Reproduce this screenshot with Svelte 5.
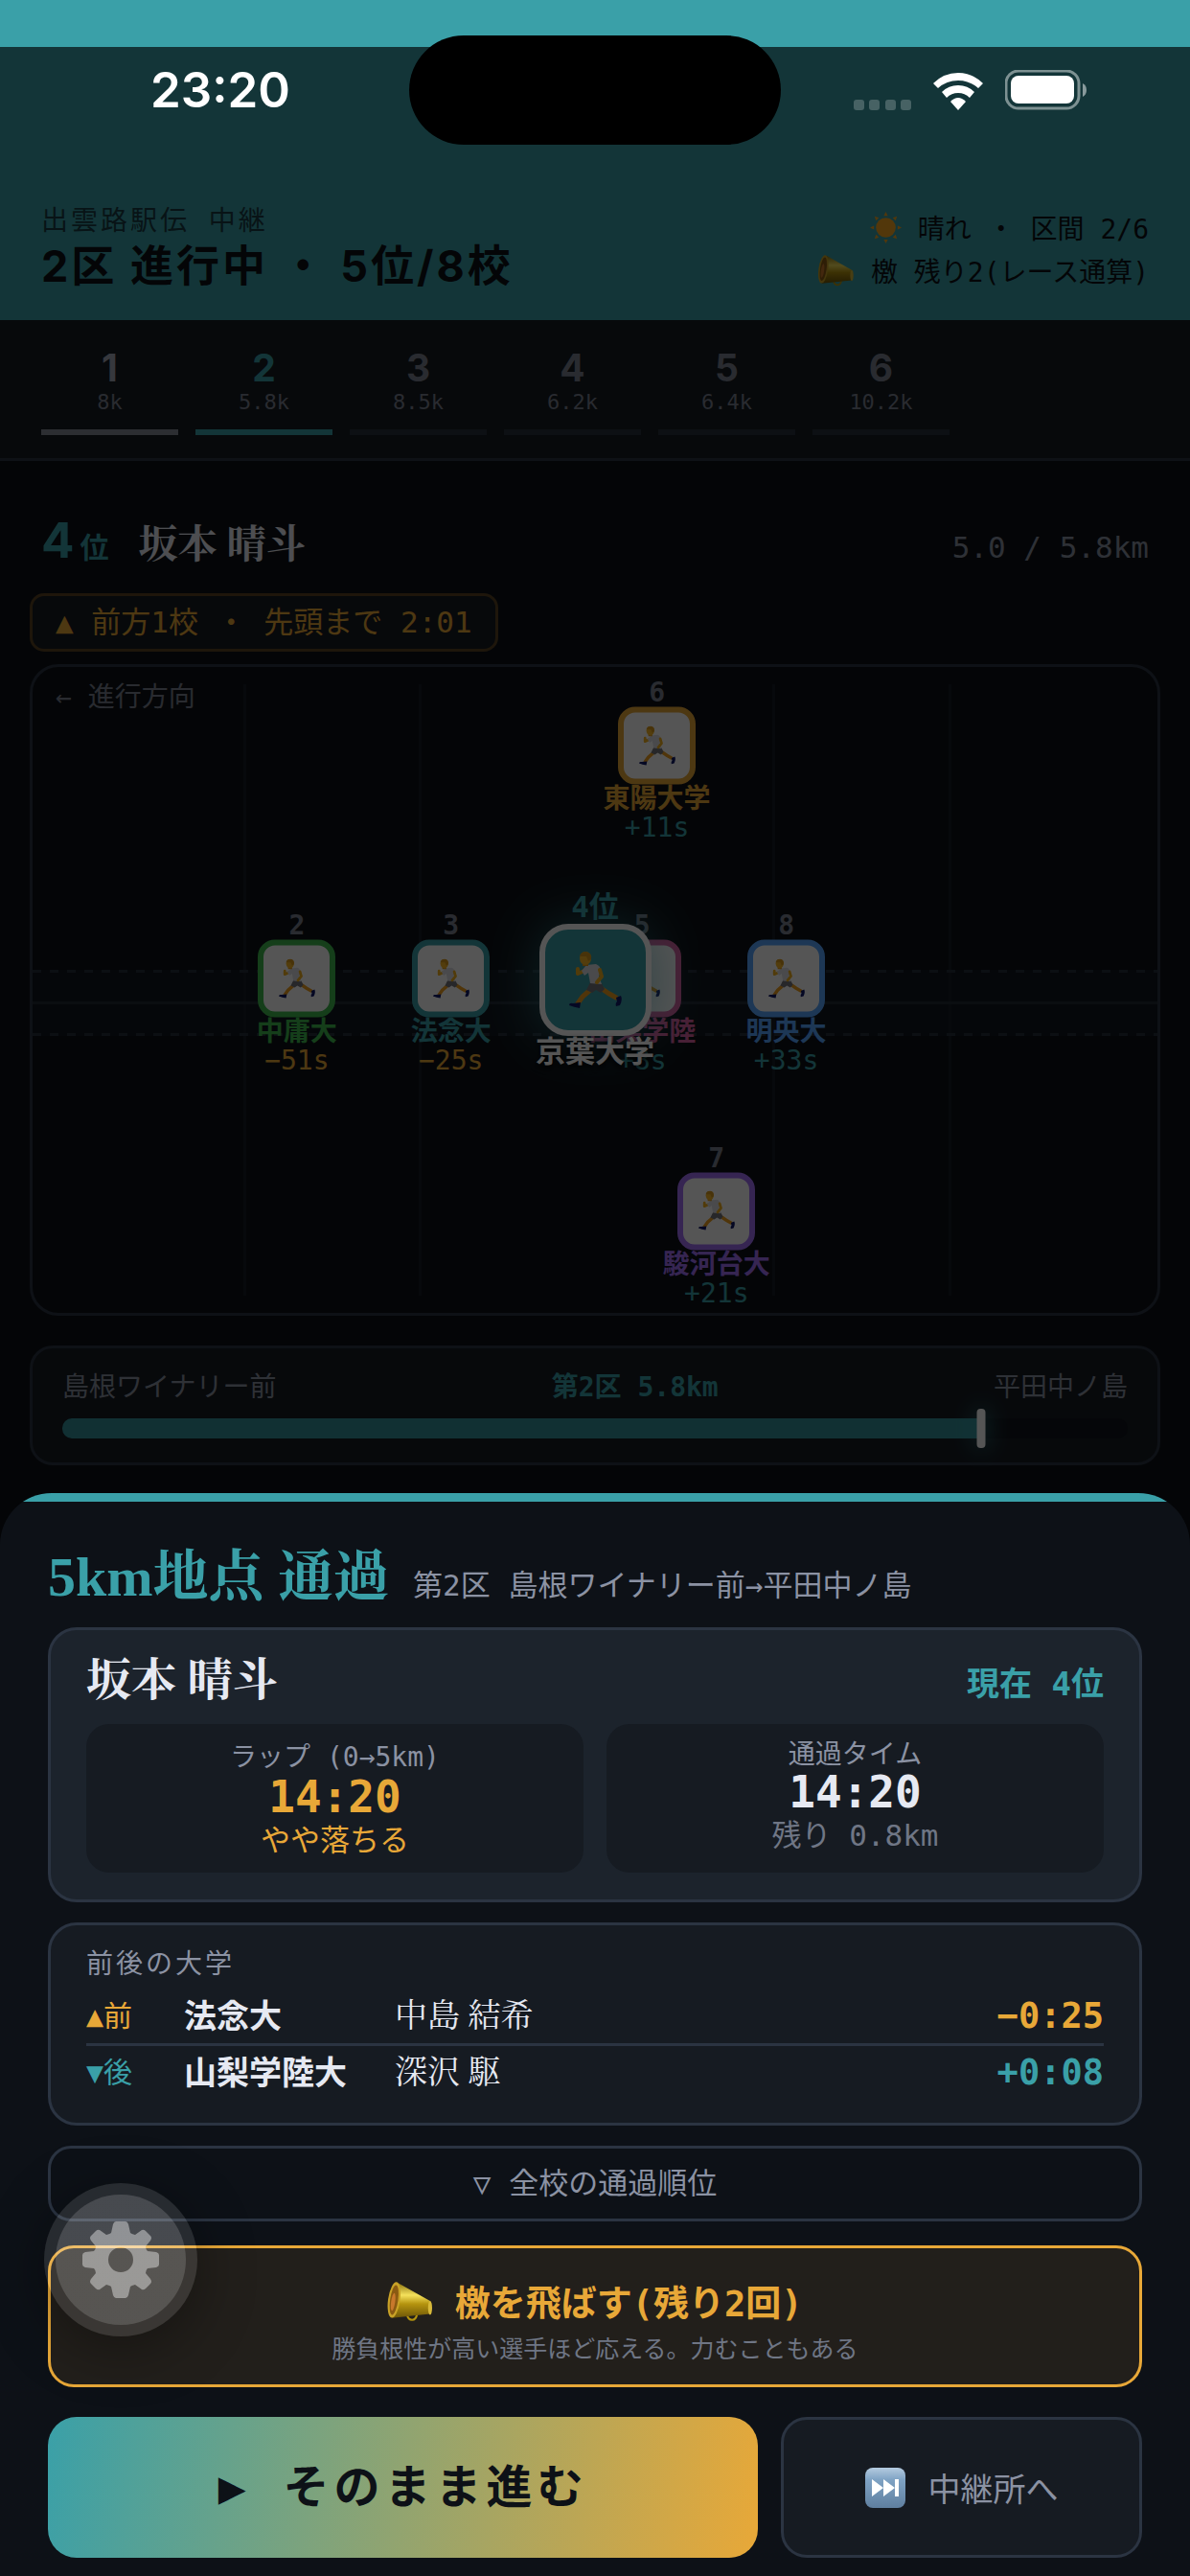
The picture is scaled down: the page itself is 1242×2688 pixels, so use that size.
<script lang="ts">
type Team = {
    rank: number
    name: string
    color: string
    x: number
    y: number
    gap: string
}

const legs = [
    { no: 1, dist: '8k', status: 'done' },
    { no: 2, dist: '5.8k', status: 'active' },
    { no: 3, dist: '8.5k', status: 'todo' },
    { no: 4, dist: '6.2k', status: 'todo' },
    { no: 5, dist: '6.4k', status: 'todo' },
    { no: 6, dist: '10.2k', status: 'todo' },
]

// x and y are percentages of the course map
const teams: Team[] = [
    { rank: 6, name: '東陽大学', color: '#e8a838', x: 55.5, y: 14, gap: '+11s' },
    { rank: 2, name: '中庸大', color: '#3fb950', x: 23.5, y: 50, gap: '−51s' },
    { rank: 3, name: '法念大', color: '#3aa0a8', x: 37.2, y: 50, gap: '−25s' },
    { rank: 5, name: '山梨学陸', color: '#db61a2', x: 54.2, y: 50, gap: '+8s' },
    { rank: 8, name: '明央大', color: '#58a6ff', x: 67, y: 50, gap: '+33s' },
    { rank: 7, name: '駿河台大', color: '#a371f7', x: 60.8, y: 86, gap: '+21s' },
]

const gridLines = [18.7, 34.3, 65.8, 81.4]

const neighbors = [
    { side: 'ahead', mark: '▲前', school: '法念大', runner: '中島 結希', diff: '−0:25' },
    { side: 'behind', mark: '▼後', school: '山梨学陸大', runner: '深沢 駆', diff: '+0:08' },
]

const current = 5.0
const total = 5.8
let progress = $derived((current / total) * 100)
let showAll = $state(false)
</script>

{#snippet runnerIcon()}
    <svg class="runner" viewBox="0 0 55 60" aria-hidden="true">
        <path d="M33 38 L42 44 L49 48" fill="none" stroke="#f0a020" stroke-width="5" stroke-linecap="round" />
        <path d="M22 40 L14 47 L9 54" fill="none" stroke="#f0a020" stroke-width="5" stroke-linecap="round" />
        <path d="M12 53 L11 59 Q5 58 0 56 Q0 53 4 54 Z" fill="#10186a" />
        <path d="M49 48 L54 46 Q56 50 53 56 L49 57 Q48 54 50 52 Z" fill="#10186a" />
        <path d="M22 32 L34 33 L37 39 L33 43 L28 40 L24 43 L18 40 Z" fill="#77777c" />
        <path d="M16 20 L9 23 L9 18" fill="none" stroke="#f4b020" stroke-width="4" stroke-linecap="round" stroke-linejoin="round" />
        <path d="M13 20 L18 14 L28 13 Q33 15 33 20 L31 26 L34 34 L22 33 L20 22 L16 25 Z" fill="#dfdfe4" />
        <path d="M32 19 L34 26 L29 32" fill="none" stroke="#f4b020" stroke-width="4" stroke-linecap="round" stroke-linejoin="round" />
        <path d="M14 11 h6 v4 h-6z" fill="#e09a1c" />
        <ellipse cx="17" cy="7" rx="6" ry="7" fill="#f8b828" />
        <path d="M11 5 Q12 0 18 0 Q24 1 23 8 L20 10 L18 5 Z" fill="#d99a20" />
    </svg>
{/snippet}

{#snippet megaphoneIcon()}
    <svg class="megaphone" viewBox="0 0 46 40" aria-hidden="true">
        <defs>
            <linearGradient id="brass" x1="0" y1="0" x2="0" y2="1">
                <stop offset="0" stop-color="#8d7410" />
                <stop offset="0.35" stop-color="#f5e25c" />
                <stop offset="0.6" stop-color="#b5940f" />
                <stop offset="1" stop-color="#6e5608" />
            </linearGradient>
        </defs>
        <path d="M20 33 Q21 38 25 38 Q29 38 30 32" fill="none" stroke="#b5940f" stroke-width="2" />
        <path d="M11 1 L43 19 Q46 25 43 32 L5 36 Z" fill="url(#brass)" />
        <ellipse cx="7" cy="18" rx="6" ry="18" transform="rotate(8 7 18)" fill="#c9a227" />
        <ellipse cx="7" cy="18" rx="4" ry="15" transform="rotate(8 7 18)" fill="#8a5a12" />
        <ellipse cx="6" cy="20" rx="2" ry="9" transform="rotate(8 6 20)" fill="#c8782c" />
        <ellipse cx="43" cy="26" rx="2" ry="7" fill="#d8b93a" />
    </svg>
{/snippet}

<div class="status-bar">
    <div class="island"></div>
    <span class="clock">23:20</span>
    <div class="status-icons">
        <svg class="signal" viewBox="0 0 60 12">
            {#each [0, 16, 33, 49] as x}
                <rect {x} y="1" width="11" height="11" rx="3" fill="#fff" opacity="0.22" />
            {/each}
        </svg>
        <svg class="wifi" viewBox="0 0 52 39" fill="#fff">
            <path d="M0 11 Q11 0 26 0 Q41 0 52 11 L47 16 Q38 8 26 8 Q14 8 5 16 Z" />
            <path d="M9 20 Q16 13 26 13 Q36 13 43 20 L38 26 Q33 21 26 21 Q19 21 14 26 Z" />
            <path d="M18 30 Q22 26 26 26 Q30 26 34 30 L26 39 Z" />
        </svg>
        <svg class="battery" viewBox="0 0 86 42">
            <rect x="1" y="1" width="76" height="39" rx="13" fill="none" stroke="#fff" stroke-width="3" opacity="0.45" />
            <rect x="6" y="6" width="66" height="29" rx="8" fill="#fff" />
            <path d="M81 14 Q85 16 85 21 Q85 26 81 28 Z" fill="#fff" opacity="0.5" />
        </svg>
    </div>
</div>

<div class="race">
    <header>
        <div>
            <div class="event">出雲路駅伝 中継</div>
            <h1>2区 進行中 ・ 5位/8校</h1>
        </div>
        <div class="conditions">
            <div>
                <svg class="sun" viewBox="0 0 32 32" fill="#f5a623">
                    <circle cx="16" cy="16" r="10" />
                    {#each [0, 45, 90, 135, 180, 225, 270, 315] as deg}
                        <path d="M14 4 L16 0 L18 4 Z" transform="rotate({deg} 16 16)" />
                    {/each}
                </svg>
                晴れ ・ 区間 2/6
            </div>
            <div>{@render megaphoneIcon()} 檄 残り2(レース通算)</div>
        </div>
    </header>

    <nav class="legs">
        {#each legs as leg}
            <div class="leg {leg.status}">
                <span class="leg-no">{leg.no}</span>
                <span class="leg-dist">{leg.dist}</span>
                <span class="leg-bar"></span>
            </div>
        {/each}
    </nav>

    <main>
        <div class="runner-row">
            <span class="place">4<small>位</small></span>
            <span class="runner-name">坂本 晴斗</span>
            <span class="distance">5.0 / 5.8km</span>
        </div>
        <div class="tag">▲ 前方1校 ・ 先頭まで 2:01</div>

        <div class="map">
            <span class="direction">← 進行方向</span>
            {#each gridLines as x}
                <div class="grid-line" style="left: {x}%"></div>
            {/each}
            <div class="road"></div>
            {#each teams as team}
                <div class="token" style="left: {team.x}%; top: {team.y}%; --team: {team.color}">
                    <span class="token-rank">{team.rank}</span>
                    <div class="token-card">{@render runnerIcon()}</div>
                    <span class="token-name">{team.name}</span>
                    <span class="token-gap" class:ahead={team.gap.startsWith('−')}>{team.gap}</span>
                </div>
            {/each}
            <div class="token own">
                <span class="token-rank">4位</span>
                <div class="token-card">{@render runnerIcon()}</div>
                <span class="token-name">京葉大学</span>
                <span class="token-gap"></span>
            </div>
        </div>

        <div class="course">
            <div class="course-labels">
                <span>島根ワイナリー前</span>
                <strong>第2区 5.8km</strong>
                <span>平田中ノ島</span>
            </div>
            <div class="track">
                <div class="fill" style="width: {progress}%"></div>
                <div class="marker" style="left: {progress}%"></div>
            </div>
        </div>
    </main>
</div>

<div class="backdrop"></div>

<section class="sheet">
    <div class="sheet-title">
        <h2>5km地点 通過</h2>
        <span>第2区 島根ワイナリー前→平田中ノ島</span>
    </div>

    <div class="card hero">
        <div class="hero-head">
            <span class="hero-name">坂本 晴斗</span>
            <span class="hero-place">現在 4位</span>
        </div>
        <div class="stats">
            <div class="stat slow">
                <span class="stat-label mono">ラップ (0→5km)</span>
                <span class="stat-value">14:20</span>
                <span class="stat-note">やや落ちる</span>
            </div>
            <div class="stat">
                <span class="stat-label">通過タイム</span>
                <span class="stat-value">14:20</span>
                <span class="stat-note">残り 0.8km</span>
            </div>
        </div>
    </div>

    <div class="card neighbors">
        <div class="card-label">前後の大学</div>
        <table>
            <tbody>
                {#each neighbors as n}
                    <tr class={n.side}>
                        <td class="mark">{n.mark}</td>
                        <td class="school">{n.school}</td>
                        <td class="athlete">{n.runner}</td>
                        <td class="diff">{n.diff}</td>
                    </tr>
                {/each}
            </tbody>
        </table>
    </div>

    <button class="toggle" aria-expanded={showAll} onclick={() => (showAll = !showAll)}>▽ 全校の通過順位</button>

    <button class="cheer">
        <span class="cheer-title">{@render megaphoneIcon()} 檄を飛ばす(残り2回)</span>
        <span class="cheer-note">勝負根性が高い選手ほど応える。力むこともある</span>
    </button>

    <div class="actions">
        <button class="go">▶ そのまま進む</button>
        <button class="skip">
            <svg viewBox="0 0 42 42" aria-hidden="true">
                <defs>
                    <linearGradient id="skip-bg" x1="0" y1="0" x2="0" y2="1">
                        <stop offset="0" stop-color="#b4cbe0" />
                        <stop offset="0.3" stop-color="#7fa3c4" />
                        <stop offset="1" stop-color="#5f7f9f" />
                    </linearGradient>
                </defs>
                <rect width="42" height="42" rx="8" fill="url(#skip-bg)" />
                <path d="M7 12 L19 21 L7 30 Z M19 12 L31 21 L19 30 Z M31 12 h4 v18 h-4 Z" fill="#fff" />
            </svg>
            中継所へ
        </button>
    </div>
</section>

<button class="settings" aria-label="設定">
    <svg viewBox="-40 -40 80 80" aria-hidden="true">
        <path
            fill-rule="evenodd"
            d="M-5 -40 H5 Q7 -40 8 -37 L10 -28 Q11 -27 15 -26 L22 -31 Q24 -32 26 -30 L31 -25 Q33 -23 31 -20 L26 -14 Q26 -11 28 -9 L37 -8 Q40 -7 40 -5 V5 Q40 7 37 8 L28 9 Q26 11 26 14 L31 20 Q33 23 31 25 L26 30 Q24 32 22 31 L15 26 Q11 27 10 28 L8 37 Q7 40 5 40 H-5 Q-7 40 -8 37 L-10 28 Q-11 27 -15 26 L-22 31 Q-24 32 -26 30 L-31 25 Q-33 23 -31 20 L-26 14 Q-26 11 -28 9 L-37 8 Q-40 7 -40 5 V-5 Q-40 -7 -37 -8 L-28 -9 Q-26 -11 -26 -14 L-31 -20 Q-33 -23 -31 -25 L-26 -30 Q-24 -32 -22 -31 L-15 -26 Q-11 -27 -10 -28 L-8 -37 Q-7 -40 -5 -40 Z M13 0 A13 13 0 1 0 -13 0 A13 13 0 1 0 13 0 Z" />
    </svg>
</button>

<style>
:global(body) {
    --teal: #3aa0a8;
    --amber: #e8a838;
    --bg: #0d1117;
    --panel: #161b22;
    --line: #2b3442;
    --text: #e6e9f2;
    --muted: #8b92a3;
    --faint: #7b8190;
    --mono: 'DejaVu Sans Mono', 'Noto Sans CJK JP', monospace;
    --sans: Inter, 'Noto Sans CJK JP', sans-serif;
    --serif: 'Liberation Serif', 'Noto Serif CJK JP', 'Noto Sans CJK JP', serif;
    background: var(--bg);
    color: var(--text);
    font-family: var(--mono);
    font-size: 28px;
    overflow: hidden;
}
button {
    font-family: inherit;
    cursor: pointer;
}
h1,
h2 {
    margin: 0;
}

/* status bar */
.status-bar {
    position: fixed;
    inset: 0 0 auto;
    z-index: 3;
    display: flex;
    justify-content: space-between;
    align-items: center;
    height: 151px;
    padding: 37px 107px 0 157px;
    box-sizing: border-box;
}
.island {
    position: absolute;
    left: 50%;
    top: 37px;
    width: 388px;
    height: 114px;
    border-radius: 57px;
    background: #000;
    transform: translateX(-50%);
}
.clock {
    color: #fff;
    font: 600 51px/60px var(--sans);
}
.status-icons {
    display: flex;
    align-items: flex-end;
    gap: 23px;
}
.signal {
    width: 60px;
    height: 12px;
}
.wifi {
    width: 52px;
    height: 39px;
}
.battery {
    width: 86px;
    height: 42px;
}

/* race screen */
.race {
    min-height: 100vh;
    background: var(--bg);
}
header {
    display: flex;
    justify-content: space-between;
    padding: 214px 43px 26px;
    background: var(--teal);
    color: var(--bg);
}
.event {
    line-height: 33px;
    letter-spacing: 3px;
    opacity: 0.7;
}
h1 {
    font: 700 45px/61px var(--sans);
    letter-spacing: 3px;
}
.conditions {
    padding-top: 3px;
    text-align: right;
    line-height: 45px;
}
.sun {
    width: 33px;
    height: 33px;
    vertical-align: -5px;
}
.conditions .megaphone {
    width: 39px;
    height: 33px;
    vertical-align: -5px;
}
.legs {
    display: flex;
    gap: 18px;
    padding: 27px 43px 24px;
    background: var(--panel);
    border-bottom: 3px solid var(--line);
}
.leg {
    display: flex;
    flex-direction: column;
    width: 143px;
    text-align: center;
    color: var(--faint);
}
.leg-no {
    font: 700 39px/45px var(--sans);
}
.leg-dist {
    font-size: 22px;
    line-height: 28px;
    margin-bottom: 14px;
}
.leg-bar {
    height: 6px;
    background: #29313d;
}
.done .leg-no {
    color: #a3a9b8;
}
.done .leg-bar {
    background: #858a97;
}
.active .leg-no {
    color: var(--teal);
}
.active .leg-bar {
    background: var(--teal);
}
main {
    padding: 45px 31px 0;
}
.runner-row {
    display: flex;
    align-items: baseline;
    padding: 0 12px;
    line-height: 75px;
}
.place {
    color: var(--teal);
    font: 700 51px/75px var(--sans);
}
.place small {
    margin-left: 6px;
    font-size: 30px;
}
.runner-name {
    margin-left: 31px;
    font: 700 41px/75px var(--serif);
}
.distance {
    margin-left: auto;
    color: var(--muted);
    font-size: 31px;
}
.tag {
    width: fit-content;
    margin: 10px 0 13px;
    padding: 0 24px;
    border: 3px solid #5a4423;
    border-radius: 15px;
    background: var(--panel);
    color: var(--amber);
    font-size: 31px;
    line-height: 55px;
}
.map {
    position: relative;
    height: 674px;
    border: 3px solid var(--line);
    border-radius: 30px;
    overflow: hidden;
}
.direction {
    display: block;
    padding: 12px 24px;
    color: var(--faint);
    line-height: 39px;
}
.grid-line {
    position: absolute;
    top: 18px;
    bottom: 18px;
    width: 3px;
    background: #171c24;
}
.road {
    position: absolute;
    inset: 316px 0 289px;
    background:
        repeating-linear-gradient(90deg, #252d39 0 9px, transparent 9px 18px) top / 100% 3px no-repeat,
        repeating-linear-gradient(90deg, #252d39 0 9px, transparent 9px 18px) bottom / 100% 3px no-repeat,
        linear-gradient(#222a35, #222a35) center / 100% 3px no-repeat,
        #131d2880;
}
.token {
    position: absolute;
    display: flex;
    flex-direction: column;
    align-items: center;
    margin-top: 3px;
    color: var(--team);
    line-height: 30px;
    white-space: nowrap;
    transform: translate(-50%, -50%);
}
.token-rank {
    color: var(--faint);
    font-weight: 700;
}
.token-card {
    display: grid;
    place-items: center;
    box-sizing: border-box;
    width: 81px;
    height: 81px;
    border: 6px solid var(--team);
    border-radius: 18px;
    background: #fff;
}
.runner {
    width: 38px;
    height: 42px;
}
.token-name {
    font-weight: 700;
}
.token-gap {
    min-height: 30px;
    color: var(--teal);
}
.token-gap.ahead {
    color: var(--amber);
}
.own {
    --team: #fff;
    left: 50%;
    top: 50%;
    font-size: 31px;
    line-height: 33px;
}
.own .token-rank {
    color: var(--teal);
    line-height: 36px;
}
.own .token-card {
    width: 117px;
    height: 117px;
    border-radius: 30px;
    background: var(--teal);
    box-shadow: 0 0 54px #3aa0a899;
}
.own .runner {
    width: 55px;
    height: 60px;
}
.own .token-name {
    text-shadow: 0 3px 6px #000;
}
.course {
    margin-top: 31px;
    padding: 24px 31px 25px;
    border: 3px solid var(--line);
    border-radius: 24px;
    background: var(--panel);
}
.course-labels {
    display: flex;
    justify-content: space-between;
    color: var(--muted);
    line-height: 33px;
}
.course-labels strong {
    color: var(--teal);
}
.track {
    position: relative;
    height: 21px;
    margin-top: 16px;
    border-radius: 10px;
    background: #10141b;
}
.fill {
    height: 100%;
    border-radius: 10px 0 0 10px;
    background: #35919a;
}
.marker {
    position: absolute;
    top: -10px;
    width: 9px;
    height: 41px;
    border-radius: 4px;
    background: #fff;
    box-shadow: 0 0 24px #3aa0a8;
    transform: translateX(-50%);
}
.backdrop {
    position: fixed;
    inset: 49px 0 0;
    z-index: 1;
    background: rgba(0, 0, 0, 0.667);
}

/* checkpoint sheet */
.sheet {
    position: fixed;
    inset: auto 0 0;
    z-index: 2;
    padding: 50px 50px 19px;
    border-radius: 54px 54px 0 0;
    background: linear-gradient(var(--teal) 9px, var(--bg) 9px);
}
.sheet-title {
    display: flex;
    align-items: baseline;
    gap: 25px;
    margin-bottom: 6px;
    color: var(--muted);
    font-size: 31px;
    line-height: 75px;
}
h2 {
    color: var(--teal);
    font: 700 58px/75px var(--serif);
}
.card {
    margin-bottom: 21px;
    padding: 24px 37px;
    border: 3px solid var(--line);
    border-radius: 30px;
    background: var(--panel);
}
.hero {
    padding: 21px 37px 28px;
    background: #1c232c;
}
.hero-head {
    display: flex;
    justify-content: space-between;
    align-items: baseline;
    margin-bottom: 10px;
    line-height: 63px;
}
.hero-name {
    font: 700 47px/63px var(--serif);
}
.hero-place {
    color: var(--teal);
    font-size: 34px;
    font-weight: 700;
}
.stats {
    display: grid;
    grid-template-columns: 1fr 1fr;
    gap: 24px;
}
.stat {
    display: flex;
    flex-direction: column;
    padding: 18px 24px 14px;
    border-radius: 24px;
    background: var(--panel);
    text-align: center;
}
.stat-label {
    color: var(--muted);
    line-height: 28px;
}
.stat-label.mono {
    line-height: 33px;
}
.stat-value {
    font-size: 46px;
    font-weight: 700;
    line-height: 51px;
}
.stat-note {
    color: #6f7685;
    font-size: 31px;
    line-height: 39px;
}
.slow .stat-value,
.slow .stat-note {
    color: var(--amber);
}
.card-label {
    margin-bottom: 10px;
    color: var(--muted);
    line-height: 33px;
    letter-spacing: 3px;
}
table {
    width: 100%;
    border-collapse: collapse;
}
td {
    height: 56px;
    padding: 0;
    line-height: 50px;
}
tr + tr td {
    border-top: 3px solid var(--line);
}
.mark {
    width: 102px;
    font-size: 30px;
}
.school {
    width: 220px;
    font-size: 34px;
    font-weight: 700;
}
.athlete {
    font-family: var(--serif);
    font-size: 34px;
}
.diff {
    font-size: 37px;
    font-weight: 700;
    text-align: right;
}
.ahead .mark,
.ahead .diff {
    color: var(--amber);
}
.behind .mark,
.behind .diff {
    color: var(--teal);
}
.toggle {
    display: block;
    width: 100%;
    margin-bottom: 25px;
    padding: 15px;
    border: 3px solid var(--line);
    border-radius: 24px;
    background: none;
    color: var(--muted);
    font-size: 31px;
    line-height: 43px;
}
.cheer {
    display: flex;
    flex-direction: column;
    align-items: center;
    width: 100%;
    margin-bottom: 31px;
    padding: 33px 24px 18px;
    border: 3px solid var(--amber);
    border-radius: 27px;
    background: #221f1b;
    color: var(--amber);
}
.cheer-title {
    margin-bottom: 3px;
    font-size: 37px;
    font-weight: 700;
    line-height: 52px;
}
.cheer-title .megaphone {
    width: 48px;
    height: 42px;
    vertical-align: -6px;
}
.cheer-note {
    color: #6f7685;
    font-size: 25px;
    line-height: 36px;
}
.actions {
    display: flex;
    gap: 24px;
}
.go {
    flex: 1;
    padding: 36px 24px;
    border: 0;
    border-radius: 30px;
    background: linear-gradient(100deg, var(--teal), var(--amber));
    color: var(--bg);
    font-size: 48px;
    font-weight: 700;
    line-height: 75px;
    letter-spacing: 5px;
}
.skip {
    display: flex;
    align-items: center;
    justify-content: center;
    gap: 24px;
    width: 33%;
    border: 3px solid var(--line);
    border-radius: 27px;
    background: var(--panel);
    color: var(--muted);
    font-size: 34px;
}
.skip svg {
    width: 42px;
    height: 42px;
}
.settings {
    position: fixed;
    left: 46px;
    bottom: 250px;
    z-index: 4;
    display: grid;
    place-items: center;
    width: 160px;
    height: 160px;
    padding: 0;
    border: 12px solid transparent;
    border-radius: 50%;
    background:
        linear-gradient(#ffffff26, #ffffff26) padding-box,
        linear-gradient(#ffffff1c, #ffffff1c) border-box;
    box-shadow: 0 12px 60px #00000059;
}
.settings svg {
    width: 80px;
    height: 80px;
    fill: #ffffff66;
}
</style>
